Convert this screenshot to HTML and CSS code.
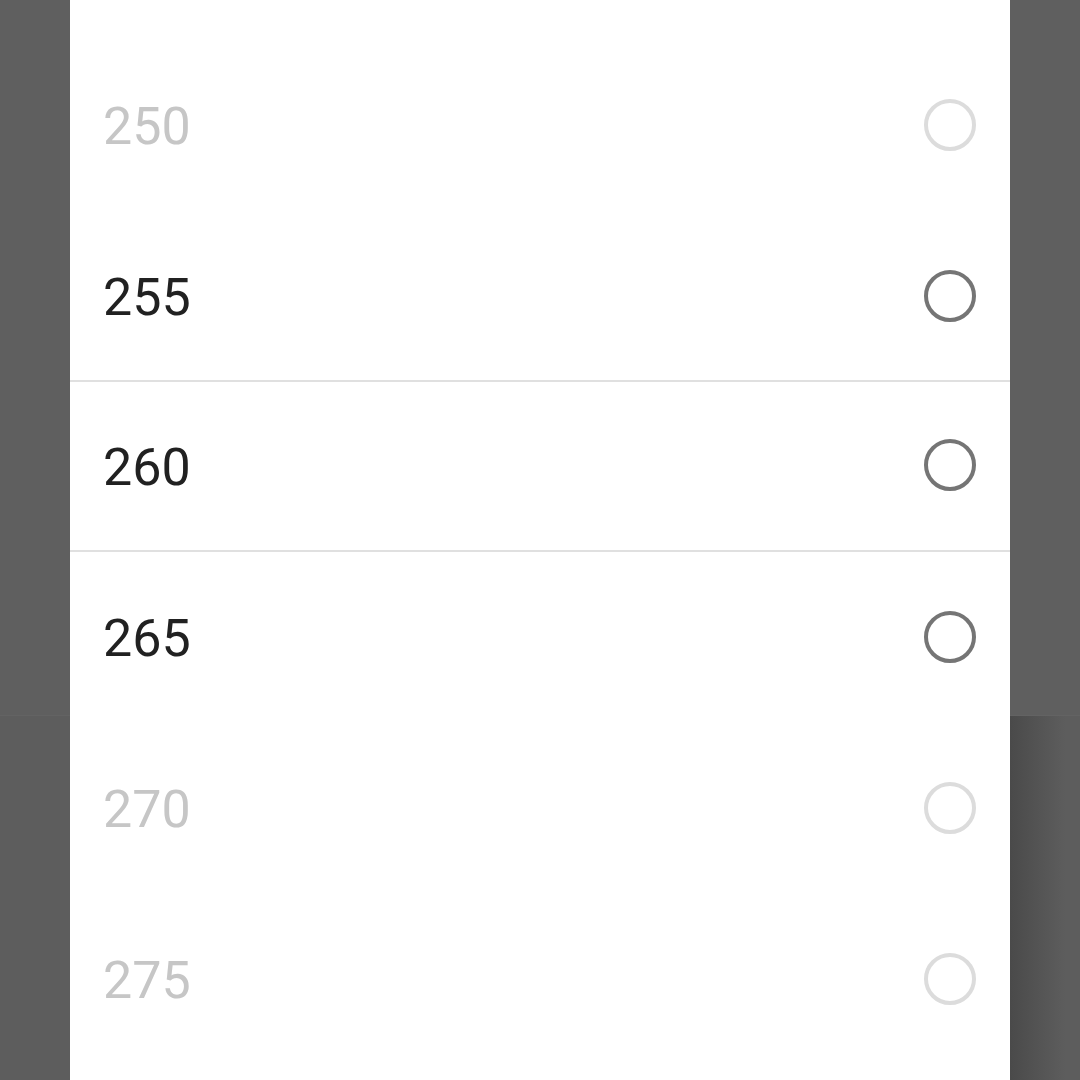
FILE: index.html
```html
<!DOCTYPE html>
<html lang="en">
<head>
  <meta charset="UTF-8">
  <meta name="viewport" content="width=device-width, initial-scale=1.0">
  <title>Select value</title>
  <link rel="stylesheet" href="styles.css">
</head>
<body>
  <div class="backdrop">
    <div class="backdrop-top"></div>
    <div class="backdrop-bottom"></div>
  </div>
  <div class="dialog">
    <ul class="picker">
      <li class="option faded">
        <span class="label">250</span>
        <span class="radio"></span>
      </li>
      <li class="option">
        <span class="label">255</span>
        <span class="radio"></span>
      </li>
      <li class="option current">
        <span class="label">260</span>
        <span class="radio"></span>
      </li>
      <li class="option">
        <span class="label">265</span>
        <span class="radio"></span>
      </li>
      <li class="option faded">
        <span class="label">270</span>
        <span class="radio"></span>
      </li>
      <li class="option faded">
        <span class="label">275</span>
        <span class="radio"></span>
      </li>
    </ul>
  </div>
</body>
</html>
```

FILE: styles.css
```css
html, body {
  margin: 0;
  padding: 0;
  height: 100%;
  overflow: hidden;
}

body {
  background-color: #5f5f5f;
  font-family: Roboto, "Noto Sans", sans-serif;
  position: relative;
}

.backdrop {
  position: absolute;
  inset: 0;
  display: flex;
  flex-direction: column;
}

.backdrop-top {
  height: 715px;
  background-color: #5f5f5f;
  border-bottom: 1px solid #636363;
}

.backdrop-bottom {
  flex: 1;
  background: linear-gradient(to right, #5d5d5d 0, #5d5d5d 1010px, #4a4a4a 1010px, #5d5d5d 1065px);
}

.dialog {
  position: absolute;
  top: 0;
  bottom: 0;
  left: 70px;
  width: 940px;
  background-color: #fff;
}

.picker {
  list-style: none;
  margin: 0;
  padding: 39px 0 0 0;
}

.option {
  height: 171px;
  box-sizing: border-box;
  display: flex;
  align-items: center;
  justify-content: space-between;
  padding: 2px 34px 0 33px;
}

.option.current {
  border-top: 2px solid #e0e0e0;
  border-bottom: 2px solid #e0e0e0;
  margin-top: -1px;
  height: 172px;
  padding-top: 0;
}

.option.current + .option {
  margin-top: -1px;
}

.label {
  font-size: 52px;
  color: #212121;
  padding-top: 2px;
}

.radio {
  width: 44px;
  height: 44px;
  margin-top: -2px;
  border: 4px solid #757575;
  border-radius: 50%;
}

.faded .label {
  color: #c6c6c6;
}

.faded .radio {
  border-color: #dcdcdc;
}
```
